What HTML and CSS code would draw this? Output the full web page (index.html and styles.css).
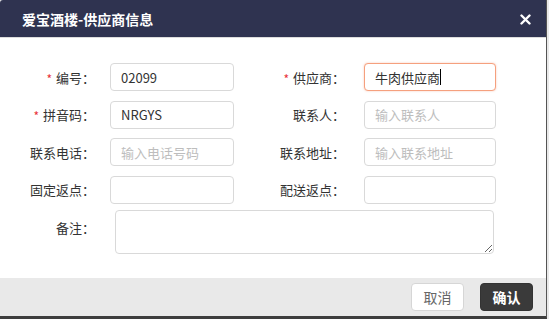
FILE: index.html
```html
<!DOCTYPE html>
<html lang="zh-CN">
<head>
    <meta charset="UTF-8">
    <meta name="viewport" content="width=device-width, initial-scale=1.0">
    <title>爱宝酒楼-供应商信息</title>
    <link rel="stylesheet" href="styles.css">
</head>
<body>

    <div class="dialog">
        <div class="dialog-head">
            <span class="dialog-title">爱宝酒楼-供应商信息</span>
            <svg class="close" width="11" height="11" viewBox="0 0 11 11">
                <path d="M1.5 1.5 L9.5 9.5 M9.5 1.5 L1.5 9.5" stroke="#ffffff" stroke-width="2.4" stroke-linecap="round"/>
            </svg>
        </div>

        <div class="dialog-body">
            <div class="form">
                <label class="label"><span class="req">*</span>编号：</label>
                <input class="field" type="text" value="02099">
                <label class="label label-r"><span class="req">*</span>供应商：</label>
                <div class="field field-focus">牛肉供应商<span class="caret"></span></div>

                <label class="label"><span class="req">*</span>拼音码：</label>
                <input class="field" type="text" value="NRGYS">
                <label class="label label-r">联系人：</label>
                <input class="field" type="text" placeholder="输入联系人">

                <label class="label">联系电话：</label>
                <input class="field" type="text" placeholder="输入电话号码">
                <label class="label label-r">联系地址：</label>
                <input class="field" type="text" placeholder="输入联系地址">

                <label class="label">固定返点：</label>
                <input class="field" type="text">
                <label class="label label-r">配送返点：</label>
                <input class="field" type="text">

                <label class="label label-note">备注：</label>
                <textarea class="note"></textarea>
            </div>
        </div>

        <div class="dialog-foot">
            <button class="btn btn-cancel">取消</button>
            <button class="btn btn-ok">确认</button>
        </div>
    </div>

</body>
</html>
```

FILE: styles.css
```css
body {
    margin: 0;
    background: #e9e9e9;
    font-family: "Noto Sans CJK SC", "Noto Sans", sans-serif;
    color: #333333;
    font-size: 13px;
}
.dialog {
    width: 546px;
    height: 316px;
    background: #ffffff;
    border-right: 1px solid #555555;
    border-bottom: 3px solid #3d3d3d;
    border-top-left-radius: 3px;
    display: flex;
    flex-direction: column;
    overflow: hidden;
}
.dialog-head {
    height: 37px;
    flex: none;
    background: #2f3350;
    border-bottom: 1px solid #dcdcdc;
    display: flex;
    align-items: center;
    justify-content: space-between;
    padding: 0 15px 0 22px;
}
.dialog-title {
    color: #ffffff;
    font-size: 14px;
    font-weight: bold;
}
.close {
    margin-top: 2px;
}
.dialog-body {
    flex: 1;
    padding-top: 25px;
}
.form {
    display: grid;
    grid-template-columns: 110px 124px 130px 132px;
    grid-auto-rows: 28px;
    row-gap: 9.5px;
    align-items: center;
}
.label {
    text-align: right;
    padding-right: 15px;
    white-space: nowrap;
}
.label-r {
    padding-right: 19px;
}
.req {
    color: #e8303a;
    font-size: 12px;
    margin-right: 4px;
    position: relative;
    top: 1px;
}
.field {
    box-sizing: border-box;
    height: 28px;
    width: 100%;
    border: 1px solid #d9d9d9;
    border-radius: 4px;
    padding: 0 10px;
    font-family: inherit;
    font-size: 13px;
    color: #333333;
    outline: none;
    background: #ffffff;
}
.field::placeholder {
    color: #bdbdbd;
}
.field-focus {
    display: flex;
    align-items: center;
    border-color: #f5a07e;
    box-shadow: 0 0 2px rgba(245, 140, 100, 0.5);
}
.caret {
    display: inline-block;
    width: 1px;
    height: 16px;
    background: #000000;
}
.label-note {
    align-self: start;
    margin-top: 5px;
}
.note {
    grid-column: 2 / 5;
    box-sizing: border-box;
    height: 44px;
    margin: -3px 2px 0 5px;
    align-self: start;
    border: 1px solid #d9d9d9;
    border-radius: 4px;
    font-family: inherit;
    outline: none;
}
.dialog-foot {
    height: 38px;
    flex: none;
    background: #e9e9e9;
    display: flex;
    align-items: center;
    justify-content: flex-end;
    gap: 16px;
    padding-right: 13px;
}
.btn {
    width: 53px;
    height: 28px;
    border-radius: 4px;
    font-family: inherit;
    font-size: 14px;
    cursor: pointer;
}
.btn-cancel {
    background: #ffffff;
    border: 1px solid #d6d6d6;
    color: #666666;
}
.btn-ok {
    background: #3a3a3a;
    border: 1px solid #333333;
    color: #ffffff;
    font-weight: bold;
}
```
